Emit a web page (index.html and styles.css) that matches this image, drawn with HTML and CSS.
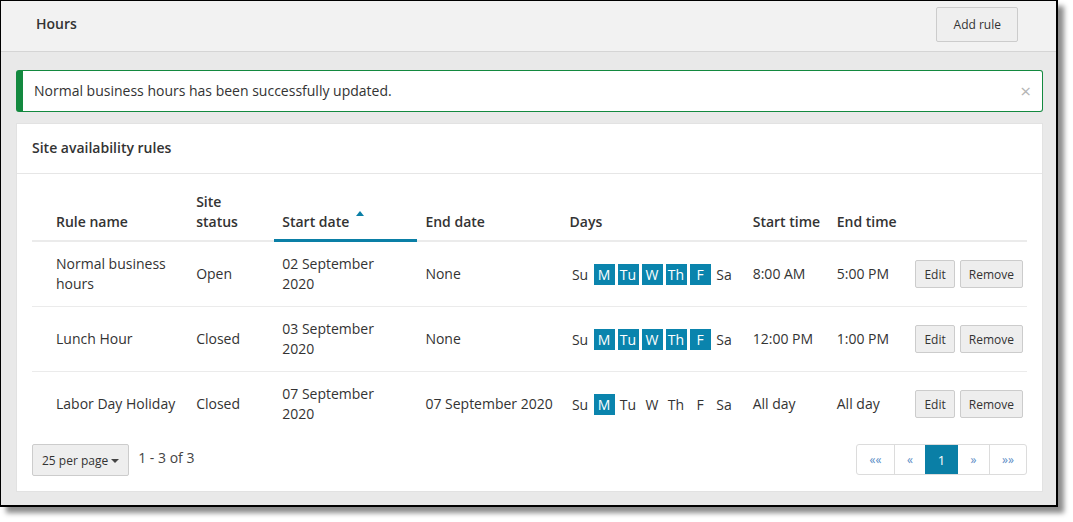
FILE: index.html
```html
<!DOCTYPE html>
<html lang="en">
<head>
<meta charset="utf-8">
<title>Hours</title>
<link rel="stylesheet" href="styles.css">
</head>
<body>
<div class="frame">
  <header class="topbar">
    <h1 class="title">Hours</h1>
    <button class="btn btn-add">Add rule</button>
  </header>
  <main class="content">
    <div class="alert">
      <span class="alert-text">Normal business hours has been successfully updated.</span>
      <span class="alert-close">&times;</span>
    </div>
    <section class="card">
      <div class="card-header">Site availability rules</div>
      <div class="card-body">
        <table class="rules">
          <colgroup>
            <col class="w-name"><col class="w-status"><col class="w-start"><col class="w-end">
            <col class="w-days"><col class="w-stime"><col class="w-etime"><col class="w-actions">
          </colgroup>
          <thead>
            <tr>
              <th class="first">Rule name</th>
              <th><span class="wrap-min">Site status</span></th>
              <th class="sorted"><span class="sort-label">Start date<span class="sort-caret"></span></span></th>
              <th>End date</th>
              <th>Days</th>
              <th>Start time</th>
              <th>End time</th>
              <th></th>
            </tr>
          </thead>
          <tbody>
            <tr>
              <td class="first">Normal business hours</td>
              <td>Open</td>
              <td><span class="date-wrap">02 September 2020</span></td>
              <td class="nowrap">None</td>
              <td><div class="days"><span class="day">Su</span><span class="day on">M</span><span class="day on">Tu</span><span class="day on">W</span><span class="day on">Th</span><span class="day on">F</span><span class="day">Sa</span></div></td>
              <td>8:00 AM</td>
              <td>5:00 PM</td>
              <td class="actions"><div class="action-group"><button class="btn btn-sm">Edit</button><button class="btn btn-sm">Remove</button></div></td>
            </tr>
            <tr>
              <td class="first">Lunch Hour</td>
              <td>Closed</td>
              <td><span class="date-wrap">03 September 2020</span></td>
              <td class="nowrap">None</td>
              <td><div class="days"><span class="day">Su</span><span class="day on">M</span><span class="day on">Tu</span><span class="day on">W</span><span class="day on">Th</span><span class="day on">F</span><span class="day">Sa</span></div></td>
              <td>12:00 PM</td>
              <td>1:00 PM</td>
              <td class="actions"><div class="action-group"><button class="btn btn-sm">Edit</button><button class="btn btn-sm">Remove</button></div></td>
            </tr>
            <tr>
              <td class="first">Labor Day Holiday</td>
              <td>Closed</td>
              <td><span class="date-wrap">07 September 2020</span></td>
              <td class="nowrap">07 September 2020</td>
              <td><div class="days"><span class="day">Su</span><span class="day on">M</span><span class="day">Tu</span><span class="day">W</span><span class="day">Th</span><span class="day">F</span><span class="day">Sa</span></div></td>
              <td>All day</td>
              <td>All day</td>
              <td class="actions"><div class="action-group"><button class="btn btn-sm">Edit</button><button class="btn btn-sm">Remove</button></div></td>
            </tr>
          </tbody>
        </table>
        <div class="table-footer">
          <div class="footer-left">
            <button class="btn btn-pagesize">25 per page <span class="caret"></span></button>
            <span class="range">1 - 3 of 3</span>
          </div>
          <nav class="pager">
            <span class="page-item arrow">&laquo;&laquo;</span>
            <span class="page-item arrow">&laquo;</span>
            <span class="page-item active">1</span>
            <span class="page-item arrow">&raquo;</span>
            <span class="page-item arrow">&raquo;&raquo;</span>
          </nav>
        </div>
      </div>
    </section>
  </main>
</div>
</body>
</html>
```

FILE: styles.css
```css
* { box-sizing: border-box; }

html, body { min-height: 522px; }

body {
  margin: 0;
  background: #ffffff;
  font-family: "Open Sans", "Liberation Sans", sans-serif;
  font-size: 14px;
  line-height: 20px;
  color: #333333;
}

.frame {
  width: 1058px;
  height: 507px;
  border-style: solid;
  border-color: #000000;
  border-width: 1px 2px 2px 1px;
  background: #e9e9e9;
  box-shadow: 6px 6px 5px rgba(0, 0, 0, 0.45);
  display: flex;
  flex-direction: column;
  overflow: hidden;
}

.topbar {
  height: 51px;
  flex: none;
  background: #f2f2f2;
  border-bottom: 1px solid #d5d5d5;
  display: flex;
  justify-content: space-between;
  align-items: flex-start;
  padding: 6px 38px 0 35px;
}

.title {
  margin: 7px 0 0;
  font-size: 14px;
  line-height: 20px;
  font-weight: 600;
  color: #333333;
}

.btn {
  font-family: "Open Sans", "Liberation Sans", sans-serif;
  font-size: 12px;
  color: #333333;
  background: #eeeeee;
  border: 1px solid #cccccc;
  border-radius: 2px;
  cursor: pointer;
}

.btn-add {
  height: 35px;
  padding: 0 16px 0 17px;
  background: #efefef;
}

.content {
  flex: 1;
  padding: 18px 13px 0 15px;
}

.alert {
  height: 42px;
  background: #ffffff;
  border: 1px solid #13893f;
  border-left-width: 7px;
  border-radius: 3px;
  padding: 10px 11px 10px 11px;
  display: flex;
  justify-content: space-between;
  align-items: center;
}

.alert-close {
  color: #b5b5b5;
  font-size: 19px;
  line-height: 20px;
}

.card {
  margin-top: 11px;
  height: 369px;
  background: #ffffff;
  border: 1px solid #e2e2e2;
}

.card-header {
  height: 50px;
  border-bottom: 1px solid #e6e6e6;
  padding: 0 0 2px 15px;
  display: flex;
  align-items: center;
  font-weight: 600;
}

.card-body {
  padding: 10px 15px 15px 15px;
}

.rules {
  width: 100%;
  table-layout: fixed;
  border-collapse: separate;
  border-spacing: 0;
}

.w-name { width: 156px; }
.w-status { width: 86px; }
.w-start { width: 143px; }
.w-end { width: 144px; }
.w-days { width: 183px; }
.w-stime { width: 84px; }
.w-etime { width: 78px; }
.w-actions { width: 120px; }

.rules th {
  text-align: left;
  vertical-align: bottom;
  font-weight: 600;
  padding: 8px 8px 8px;
  border-bottom: 2px solid #ebebeb;
}

.rules th.sorted {
  padding-bottom: 7px;
  border-bottom: 3px solid #0a7fa6;
}

.rules .first { padding-left: 24px; }

.wrap-min {
  display: inline-block;
  width: min-content;
}

.sort-label { position: relative; }

.sort-caret {
  position: absolute;
  right: -15px;
  top: -1px;
  width: 0;
  height: 0;
  border-left: 4.5px solid transparent;
  border-right: 4.5px solid transparent;
  border-bottom: 5px solid #0a7fa6;
}

.rules td {
  padding: 12px 8px;
  vertical-align: middle;
  border-bottom: 1px solid #ebebeb;
}

.rules tbody tr:last-child td { border-bottom-color: #ffffff; }

.date-wrap {
  display: inline-block;
  max-width: 100px;
}

.nowrap { white-space: nowrap; }

.days {
  display: flex;
  gap: 3px;
}

.day {
  width: 21px;
  height: 21px;
  line-height: 21px;
  text-align: center;
}

.day.on {
  background: #0a84ad;
  color: #ffffff;
}

.rules td.actions { padding-right: 4px; }

.action-group {
  display: flex;
  justify-content: flex-end;
  gap: 5px;
}

.btn-sm {
  height: 28px;
  padding: 0 8px;
}

.table-footer {
  margin-top: 7px;
  display: flex;
  justify-content: space-between;
  align-items: flex-start;
}

.footer-left {
  display: flex;
  align-items: flex-start;
}

.btn-pagesize {
  height: 32px;
  padding: 0 9px;
  display: flex;
  align-items: center;
}

.caret {
  display: inline-block;
  margin-left: 3px;
  margin-top: 1px;
  width: 0;
  height: 0;
  border-left: 4px solid transparent;
  border-right: 4px solid transparent;
  border-top: 4px solid #444444;
}

.range {
  margin-left: 9px;
  margin-top: 4px;
  color: #444444;
}

.pager {
  display: flex;
  height: 31px;
  border: 1px solid #dcdcdc;
  border-radius: 3px;
  overflow: hidden;
}

.page-item {
  display: flex;
  align-items: center;
  justify-content: center;
  padding: 0 11px;
  font-size: 13px;
}

.page-item + .page-item { border-left: 1px solid #dcdcdc; }

.page-item.arrow {
  color: #5b8dc6;
  font-size: 12px;
  min-width: 31px;
}

.page-item:first-child { min-width: 37px; }
.page-item:last-child { min-width: 37px; }

.page-item.active {
  background: #0a7fa6;
  color: #ffffff;
  min-width: 33px;
  border-left: none;
}

.page-item.active + .page-item { border-left: none; }
```
